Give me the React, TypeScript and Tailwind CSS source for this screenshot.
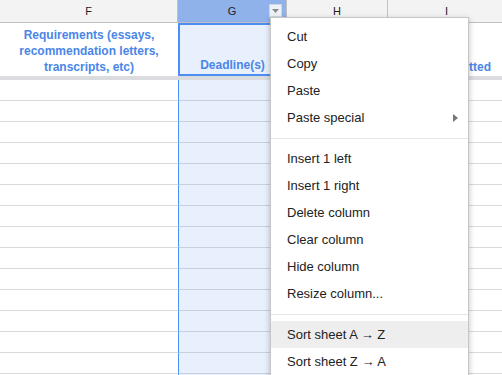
import React from "react";

const columns = [
  { key: "F", width: 178 },
  { key: "G", width: 109, selected: true },
  { key: "H", width: 101 },
  { key: "I", width: 118 },
];

const menuGroups = [
  ["Cut", "Copy", "Paste", "Paste special"],
  ["Insert 1 left", "Insert 1 right", "Delete column", "Clear column", "Hide column", "Resize column..."],
  ["Sort sheet A \u2192 Z", "Sort sheet Z \u2192 A"],
];

function HeaderText({ colKey }: { colKey: string }) {
  if (colKey === "F")
    return (
      <span>
        Requirements (essays,
        <br />
        recommendation letters,
        <br />
        transcripts, etc)
      </span>
    );
  if (colKey === "G") return <span>Deadline(s)</span>;
  if (colKey === "I") return <span>Date Submitted</span>;
  return null;
}

function ContextMenu() {
  return (
    <div className="absolute left-[270px] top-[17px] w-[199px] bg-white border border-[#c6c6c6] shadow-[0_2px_6px_rgba(0,0,0,0.25)] pt-[5px] pb-[6px] text-[13px] text-[#222]">
      {menuGroups.map((group, gi) => (
        <div key={gi}>
          {gi > 0 && <div className="mt-[7px] mb-[6px] h-px bg-[#e5e5e5]" />}
          {group.map((label) => (
            <div
              key={label}
              className={`h-[27px] flex items-center justify-between pl-[16px] pr-[10px] ${
                label === "Sort sheet A \u2192 Z" ? "bg-[#eeeeee]" : ""
              }`}
            >
              <span>{label}</span>
              {label === "Paste special" && (
                <svg width="5" height="8" viewBox="0 0 5 8">
                  <path d="M0 0 L5 4 L0 8 Z" fill="#777" />
                </svg>
              )}
            </div>
          ))}
        </div>
      ))}
    </div>
  );
}

export default function App() {
  const bodyRows = Array.from({ length: 15 });

  return (
    <div className="relative w-[502px] h-[375px] overflow-hidden bg-white font-['Liberation_Sans',Arial,sans-serif]">
      <div className="flex flex-col w-max">
        {/* Column letters */}
        <div className="flex h-[23px] border-b border-[#c0c0c0]">
          {columns.map((c) => (
            <div
              key={c.key}
              style={{ width: c.width }}
              className={`relative flex items-center justify-center border-r border-[#c0c0c0] text-[11px] text-[#222] ${
                c.selected ? "bg-[#8fb2ea]" : "bg-[#f3f3f3]"
              }`}
            >
              {c.key}
              {c.selected && (
                <div className="absolute right-[4px] top-[4px] w-[13px] h-[13px] bg-[#eef1f6] border border-[#cfd6e2] flex items-center justify-center">
                  <svg width="7" height="4" viewBox="0 0 7 4">
                    <path d="M0 0 L7 0 L3.5 4 Z" fill="#8a8a8a" />
                  </svg>
                </div>
              )}
            </div>
          ))}
        </div>

        {/* Row 1 — titles */}
        <div className="flex h-[53px]">
          {columns.map((c) => (
            <div
              key={c.key}
              style={{ width: c.width }}
              className={`flex items-end justify-center text-center pb-[1px] text-[12px] leading-[16px] font-bold text-[#4a86e8] ${
                c.selected ? "bg-[#e8f0fe] border-2 border-[#4d8ef5]" : ""
              }`}
            >
              <HeaderText colKey={c.key} />
            </div>
          ))}
        </div>

        {/* Frozen row divider */}
        <div className="h-[4px] bg-[#dadce0]" />

        {bodyRows.map((_, r) => (
          <div key={r} className="flex h-[21px]">
            {columns.map((c) => (
              <div
                key={c.key}
                style={{ width: c.width }}
                className={
                  c.selected
                    ? "bg-[#e8f0fe] border-l border-l-[#4d8ef5] border-b border-b-[#c9d0dc]"
                    : "border-b border-[#dadada]"
                }
              />
            ))}
          </div>
        ))}
      </div>

      <ContextMenu />
    </div>
  );
}
